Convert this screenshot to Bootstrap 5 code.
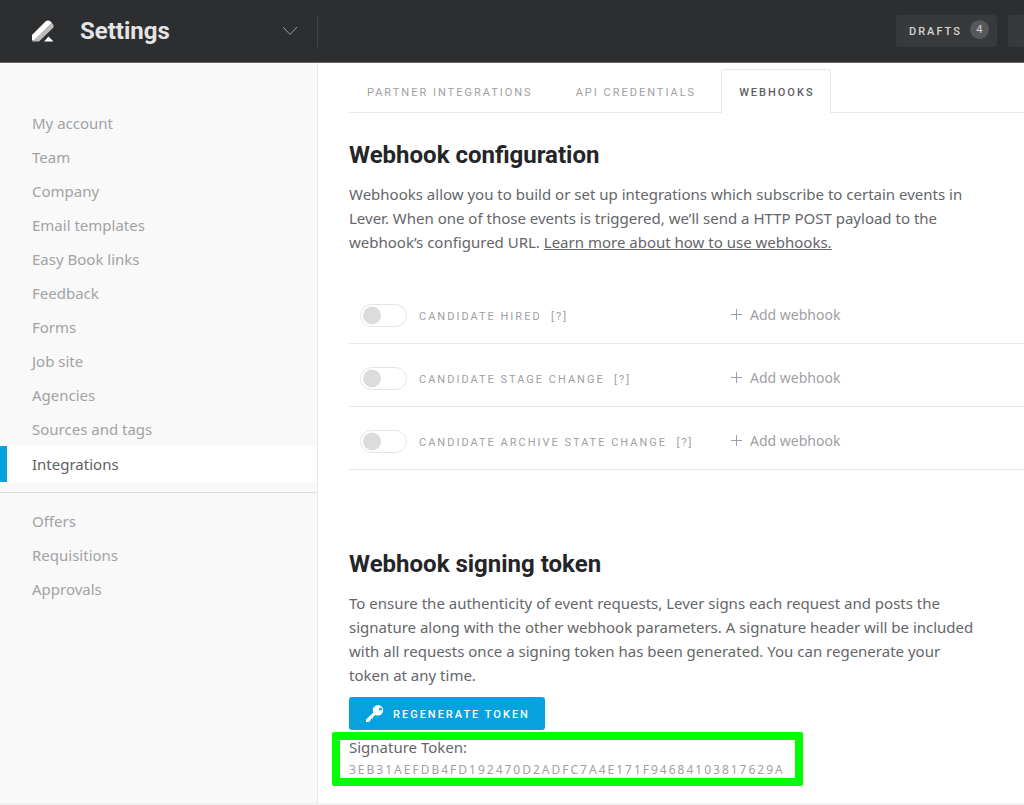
<!DOCTYPE html>
<html lang="en">
<head>
<meta charset="utf-8">
<meta name="viewport" content="width=device-width, initial-scale=1">
<title>Settings – Webhooks</title>
<link href="https://cdn.jsdelivr.net/npm/bootstrap@5.3.0/dist/css/bootstrap.min.css" rel="stylesheet">
<style>
  body { font-family: "Noto Sans", "Open Sans", sans-serif; font-size: 15px; line-height: 24px; color: #64666a; background: #fff; }
  .caps { font-family: Roboto, "Noto Sans", sans-serif; font-size: 11px; line-height: 16px; letter-spacing: 2px; text-transform: uppercase; font-weight: 400; }

  .topbar { height: 63px; background: #2d2e30; border-bottom: 1px solid #68686b; }
  .brand-area { width: 318px; height: 31px; border-right: 1px solid #434447; padding-left: 32px; padding-right: 19px; }
  .brand-area h1, .main h2 { font-family: Roboto, "Noto Sans", sans-serif; font-size: 24px; font-weight: 700; }
  .brand-area h1 { line-height: 32px; color: #e4e4e5; margin: 0 0 0 26px; }
  .bar-btn { height: 32px; background: #38393b; color: #d3d4d5; border: 0; border-radius: 3px; }
  .drafts { width: 101px; padding: 0 0 0 13px; }
  .drafts .label-text { padding-top: 2px; font-weight: 500; }
  .drafts .count { width: 19px; height: 19px; line-height: 19px; font-size: 11px; font-weight: 400; background: #56575b; color: #d3d4d5; letter-spacing: 0; margin-bottom: 3px; }
  .clipped { width: 16px; margin-left: 11px; border-radius: 3px 0 0 3px; }

  .side { width: 318px; background: #f9f9f9; border-right: 1px solid #e8e8e8; padding-top: 43px; }
  .side a { height: 34px; line-height: 34px; padding: 0 0 0 32px; color: #a2a3a5; }
  .side a.active { height: 36px; line-height: 36px; color: #5d5f63; background: #fff; border-left: 7px solid #05a2df; padding-left: 25px; }
  .side hr { margin: 10px 0 11px; color: #dcdcdc; opacity: 1; }

  .main { min-width: 0; padding: 6px 0 16px 31px; }
  .tabs { border-bottom: 1px solid #e6e6e6; gap: 9px; }
  .tabs .nav-link { padding: 15px 15px 11px 17px; color: #9fa0a3; border-radius: 3px 3px 0 0; }
  .tabs .nav-link.active { color: #5d5f63; font-weight: 500; border-color: #e6e6e6 #e6e6e6 #fff; }
  .main h2 { line-height: 32px; color: #242528; margin: 0; padding: 2px 0 11px; }
  .copy { max-width: 632px; margin: 0; }
  .copy a { color: inherit; }
  .hooks { margin-top: 27px; }
  .hook { height: 63px; border-bottom: 1px solid #e6e6e6; padding-top: 7px; }
  .hook-name { width: 382px; padding-left: 11px; color: #9fa0a3; }
  .hook-name label { padding-top: 2px; }
  .toggle.form-check-input { width: 47px; height: 23px; margin: 0 12px 0 0; float: none; border: 1px solid #e4e4e4; border-radius: 12px; background-color: #fff; background-size: 23px 23px;
    background-image: url("data:image/svg+xml,%3csvg xmlns='http://www.w3.org/2000/svg' viewBox='0 0 23 23'%3e%3ccircle cx='11' cy='11.5' r='9' fill='%23dcdcdc'/%3e%3c/svg%3e"); }
  .add { color: #9fa0a3; border: 0; background: none; padding: 0 0 2px; font-size: 14px; line-height: 24px; }
  .signing { margin-top: 76px; }
  .regen { height: 33px; width: 196px; background: #05a2df; color: #fff; border: 0; border-radius: 3px; margin-top: 10px; padding: 0 0 0 17px; font-weight: 500; }
  .regen span { padding-top: 2px; }
  .token { width: 471px; max-width: 100%; border: 8px solid #0f0; border-radius: 2px; margin: 2px 0 0 -17px; padding-left: 9px; }
  .token .name { line-height: 14px; }
  .token .value { font-family: "Noto Sans", sans-serif; font-size: 12px; color: #9fa0a3; }
  .base { border-bottom: 2px solid #f1f1f1; }
</style>
</head>
<body>
<div class="d-flex flex-column min-vh-100 overflow-hidden base">
  <header class="topbar d-flex align-items-center">
    <div class="brand-area d-flex align-items-center flex-shrink-0">
      <svg width="22" height="22" viewBox="0 0 22 22" aria-hidden="true">
        <path d="M0 15 14 1q2-1 4 0l2 2L2 20.500H0z" fill="#fff"/>
        <path d="M2 20 20 3l1.500 2v2.500L7 21.500H0z" fill="#bcbcbd"/>
        <path d="m12 21.500 4.500-5 5 5z" fill="#fff"/>
      </svg>
      <h1>Settings</h1>
      <svg class="ms-auto" width="16" height="10" viewBox="0 0 16 10" fill="none" stroke="#9a9b9d" aria-hidden="true"><path d="m1 1 7 7.500 7-7.500"/></svg>
    </div>
    <div class="ms-auto d-flex">
      <button type="button" class="bar-btn drafts caps d-flex align-items-center"><span class="label-text">Drafts</span><span class="count rounded-circle text-center ms-2">4</span></button>
      <button type="button" class="bar-btn clipped p-0" aria-label="More"></button>
    </div>
  </header>

  <div class="d-flex flex-grow-1">
    <nav class="side flex-shrink-0" aria-label="Settings">
      <div class="nav flex-column">
        <a class="nav-link" href="#">My account</a>
        <a class="nav-link" href="#">Team</a>
        <a class="nav-link" href="#">Company</a>
        <a class="nav-link" href="#">Email templates</a>
        <a class="nav-link" href="#">Easy Book links</a>
        <a class="nav-link" href="#">Feedback</a>
        <a class="nav-link" href="#">Forms</a>
        <a class="nav-link" href="#">Job site</a>
        <a class="nav-link" href="#">Agencies</a>
        <a class="nav-link" href="#">Sources and tags</a>
        <a class="nav-link active" href="#" aria-current="page">Integrations</a>
      </div>
      <hr>
      <div class="nav flex-column">
        <a class="nav-link" href="#">Offers</a>
        <a class="nav-link" href="#">Requisitions</a>
        <a class="nav-link" href="#">Approvals</a>
      </div>
    </nav>

    <main class="main flex-grow-1">
      <nav class="nav nav-tabs tabs flex-nowrap" aria-label="Integrations">
        <a class="nav-link caps" href="#">Partner integrations</a>
        <a class="nav-link caps" href="#">API credentials</a>
        <a class="nav-link caps active" href="#" aria-current="page">Webhooks</a>
      </nav>

      <section class="pt-4">
        <h2>Webhook configuration</h2>
        <p class="copy">Webhooks allow you to build or set up integrations which subscribe to certain events in Lever. When one of those events is triggered, we’ll send a HTTP POST payload to the webhook’s configured URL. <a href="#">Learn more about how to use webhooks.</a></p>
        <div class="hooks">
          <div class="hook d-flex align-items-center">
            <div class="hook-name form-switch d-flex align-items-center caps">
              <input class="form-check-input toggle" type="checkbox" role="switch" id="hired">
              <label for="hired">Candidate hired&nbsp; [?]</label>
            </div>
            <button type="button" class="add d-flex align-items-center"><svg class="me-2" width="11" height="11" viewBox="0 0 11 11" stroke="#9fa0a3" aria-hidden="true"><path d="M5.500 0v11M0 5.500h11"/></svg>Add webhook</button>
          </div>
          <div class="hook d-flex align-items-center">
            <div class="hook-name form-switch d-flex align-items-center caps">
              <input class="form-check-input toggle" type="checkbox" role="switch" id="stage">
              <label for="stage">Candidate stage change&nbsp; [?]</label>
            </div>
            <button type="button" class="add d-flex align-items-center"><svg class="me-2" width="11" height="11" viewBox="0 0 11 11" stroke="#9fa0a3" aria-hidden="true"><path d="M5.500 0v11M0 5.500h11"/></svg>Add webhook</button>
          </div>
          <div class="hook d-flex align-items-center">
            <div class="hook-name form-switch d-flex align-items-center caps">
              <input class="form-check-input toggle" type="checkbox" role="switch" id="archive">
              <label for="archive">Candidate archive state change&nbsp; [?]</label>
            </div>
            <button type="button" class="add d-flex align-items-center"><svg class="me-2" width="11" height="11" viewBox="0 0 11 11" stroke="#9fa0a3" aria-hidden="true"><path d="M5.500 0v11M0 5.500h11"/></svg>Add webhook</button>
          </div>
        </div>
      </section>

      <section class="signing">
        <h2>Webhook signing token</h2>
        <p class="copy">To ensure the authenticity of event requests, Lever signs each request and posts the signature along with the other webhook parameters. A signature header will be included with all requests once a signing token has been generated. You can regenerate your token at any time.</p>
        <button type="button" class="regen caps d-flex align-items-center">
          <svg class="me-2" width="19" height="18" viewBox="0 0 19 18" aria-hidden="true"><path fill="#fff" fill-rule="evenodd" d="M12.500 0a5.500 5 0 0 0-5 7.500L0 14.500v2.500h3.500V15.500H5v-2h2v-1.500l2.500-2A5.300 5.300 0 1 0 12.500 0zm2 2.500a1.500 1.500 0 1 1 0 3 1.500 1.500 0 0 1 0-3z"/></svg>
          <span>Regenerate token</span>
        </button>
        <div class="token">
          <div class="name">Signature Token:</div>
          <div class="value caps mt-2">3eb31aefdb4fd192470d2adfc7a4e171f94684103817629a</div>
        </div>
      </section>
    </main>
  </div>
</div>
<script src="https://cdn.jsdelivr.net/npm/bootstrap@5.3.0/dist/js/bootstrap.bundle.min.js"></script>
</body>
</html>
